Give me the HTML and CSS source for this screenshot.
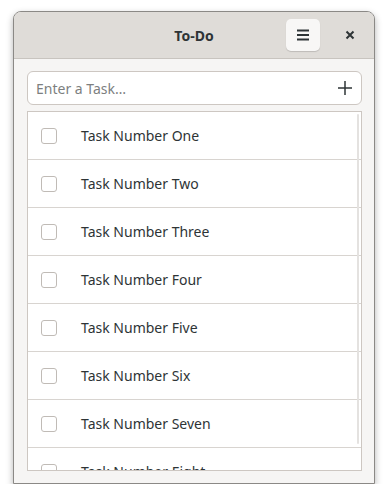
FILE: index.html
```html
<!DOCTYPE html>
<html lang="en">
<head>
    <meta charset="UTF-8">
    <meta name="viewport" content="width=device-width, initial-scale=1.0">
    <title>To-Do</title>
    <link rel="stylesheet" href="styles.css">
</head>
<body>
    <div class="window">
        <div class="headerbar">
            <span class="title">To-Do</span>
            <button class="menu-button" aria-label="Menu">
                <svg width="16" height="16" viewBox="0 0 16 16">
                    <path d="M2 3.5h12M2 8h12M2 12.5h12" stroke="#2e3436" stroke-width="2" fill="none"/>
                </svg>
            </button>
            <button class="close-button" aria-label="Close">
                <svg width="10" height="10" viewBox="0 0 10 10">
                    <path d="M1.5 1.5l7 7M8.5 1.5l-7 7" stroke="#2e3436" stroke-width="2" fill="none"/>
                </svg>
            </button>
        </div>
        <div class="content">
            <div class="entry">
                <input type="text" class="task-input" placeholder="Enter a Task…">
                <svg class="add-icon" width="16" height="16" viewBox="0 0 16 16">
                    <path d="M8 1v14M1 8h14" stroke="#2e3436" stroke-width="1.5" fill="none"/>
                </svg>
            </div>
            <div class="task-list">
                <div class="row"><span class="check"></span><span class="label">Task Number One</span></div>
                <div class="row"><span class="check"></span><span class="label">Task Number Two</span></div>
                <div class="row"><span class="check"></span><span class="label">Task Number Three</span></div>
                <div class="row"><span class="check"></span><span class="label">Task Number Four</span></div>
                <div class="row"><span class="check"></span><span class="label">Task Number Five</span></div>
                <div class="row"><span class="check"></span><span class="label">Task Number Six</span></div>
                <div class="row"><span class="check"></span><span class="label">Task Number Seven</span></div>
                <div class="row"><span class="check"></span><span class="label">Task Number Eight</span></div>
                <div class="scrollbar"></div>
            </div>
        </div>
    </div>
</body>
</html>
```

FILE: styles.css
```css
body {
    margin: 0;
    background: #ffffff;
    font-family: "Noto Sans", "Open Sans", sans-serif;
    color: #2e3436;
}
.window {
    margin: 11px 0 0 13px;
    width: 362px;
    height: 473px;
    box-sizing: border-box;
    border: 1px solid #8b8986;
    border-radius: 8px 8px 0 0;
    background: #f6f5f4;
    box-shadow: 0 3px 7px rgba(0, 0, 0, 0.3);
    display: flex;
    flex-direction: column;
    overflow: hidden;
}
.headerbar {
    height: 46px;
    flex: none;
    background: #dfdcd8;
    border-bottom: 1px solid #c8c4bf;
    position: relative;
    display: flex;
    align-items: center;
    justify-content: center;
}
.title {
    font-weight: bold;
    font-size: 14px;
}
.menu-button {
    position: absolute;
    left: 272px;
    top: 7px;
    width: 34px;
    height: 32px;
    border: none;
    border-radius: 5px;
    background: #f8f7f6;
    box-shadow: 0 1px 1px rgba(0, 0, 0, 0.15);
    display: flex;
    align-items: center;
    justify-content: center;
    padding: 0;
}
.close-button {
    position: absolute;
    left: 330px;
    top: 17px;
    width: 12px;
    height: 12px;
    border: none;
    background: none;
    padding: 0;
    display: flex;
    align-items: center;
    justify-content: center;
}
.content {
    flex: 1;
    padding: 12px 12px 12px 13px;
    display: flex;
    flex-direction: column;
    gap: 6px;
    min-height: 0;
}
.entry {
    height: 34px;
    flex: none;
    box-sizing: border-box;
    border: 1px solid #cdc7c2;
    border-radius: 6px;
    background: #ffffff;
    display: flex;
    align-items: center;
    padding: 0 8px 0 8px;
}
.task-input {
    flex: 1;
    border: none;
    outline: none;
    background: none;
    font-family: inherit;
    font-size: 14px;
    color: #2e3436;
    padding: 0;
}
.task-input::placeholder {
    color: #7d7f7f;
}
.task-list {
    flex: 1;
    min-height: 0;
    border: 1px solid #cdc7c2;
    background: #ffffff;
    overflow: hidden;
    position: relative;
}
.row {
    height: 47px;
    border-bottom: 1px solid #d8d4d0;
    display: flex;
    align-items: center;
    font-size: 14px;
}
.check {
    width: 14px;
    height: 14px;
    border: 1px solid #c0bbb6;
    border-radius: 3px;
    margin-left: 13px;
    margin-right: 24px;
    flex: none;
}
.scrollbar {
    position: absolute;
    right: 2px;
    top: 2px;
    width: 2px;
    height: 330px;
    background: #e4e2e0;
    border-radius: 1px;
}
```
